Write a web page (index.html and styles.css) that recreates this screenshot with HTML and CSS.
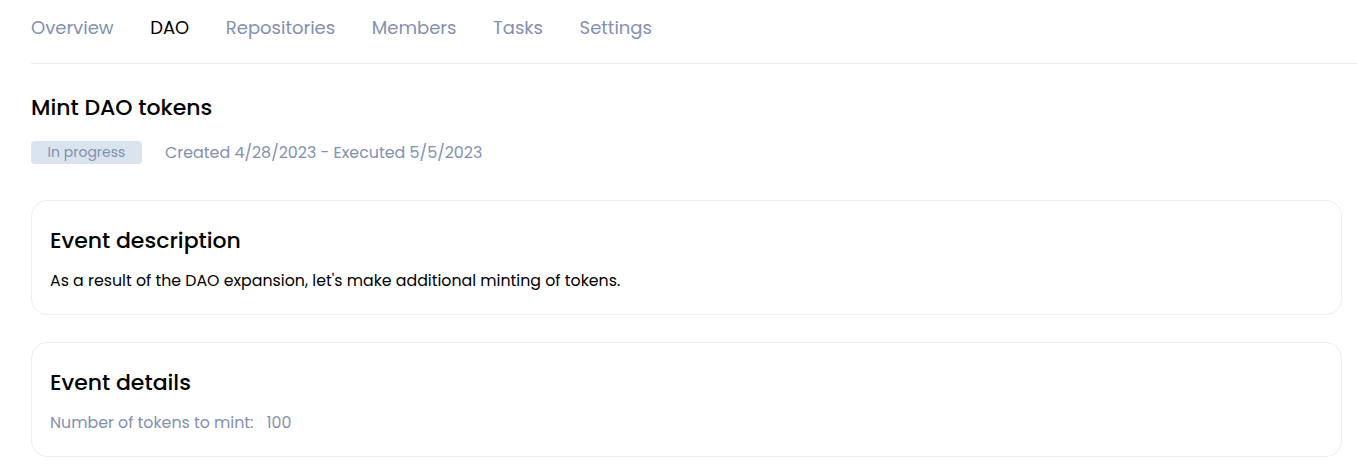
FILE: index.html
```html
<!DOCTYPE html>
<html>
<head>
<meta charset="utf-8">
<link rel="stylesheet" href="styles.css">
</head>
<body>
<div class="page">
  <nav class="tabs">
    <a class="tab">Overview</a>
    <a class="tab active">DAO</a>
    <a class="tab">Repositories</a>
    <a class="tab">Members</a>
    <a class="tab">Tasks</a>
    <a class="tab">Settings</a>
  </nav>
  <main class="content">
    <h1 class="title">Mint DAO tokens</h1>
    <div class="meta">
      <span class="badge">In progress</span>
      <span class="dates">Created 4/28/2023 - Executed 5/5/2023</span>
    </div>
    <section class="card">
      <h2 class="card-title">Event description</h2>
      <p class="card-text">As a result of the DAO expansion, let's make additional minting of tokens.</p>
    </section>
    <section class="card">
      <h2 class="card-title">Event details</h2>
      <div class="detail"><span class="label">Number of tokens to mint:</span><span class="value">100</span></div>
    </section>
  </main>
</div>
</body>
</html>
```

FILE: styles.css
```css
* { box-sizing: border-box; }
html, body { margin: 0; padding: 0; background: #fff; }
body {
  font-family: "Poppins", "Inter", "Open Sans", sans-serif;
  color: #000;
}
.page {
  padding-left: 31px;
}
.tabs {
  display: flex;
  gap: 36.6px;
  height: 64px;
  padding-top: 14px;
  border-bottom: 1px solid #e8ebf2;
}
.tab {
  font-size: 18px;
  line-height: 27px;
  color: #8390b0;
  cursor: pointer;
}
.tab.active { color: #000; }
.content {
  padding-right: 15px;
  padding-top: 28px;
}
.title {
  margin: 0;
  font-size: 22px;
  font-weight: 500;
  line-height: 32px;
}
.meta {
  display: flex;
  align-items: center;
  gap: 23px;
  margin-top: 16px;
}
.badge {
  display: inline-block;
  width: 111px;
  height: 23px;
  line-height: 23px;
  text-align: center;
  background: #d9e4ee;
  color: #8390b0;
  font-size: 14px;
  border-radius: 4px;
}
.dates {
  color: #8390b0;
  font-size: 15.9px;
}
.card {
  margin-top: 35px;
  border: 1px solid #eceef4;
  border-radius: 16px;
  padding: 24px 18px 21px;
}
.card + .card { margin-top: 27px; }
.card-title {
  margin: 0;
  font-size: 22px;
  font-weight: 500;
  line-height: 32px;
}
.card-text {
  margin: 12px 0 0;
  font-size: 15.8px;
  line-height: 24px;
}
.detail {
  margin-top: 12px;
  font-size: 15.8px;
  line-height: 24px;
  color: #8390b0;
}
.value { margin-left: 13px; }
```
